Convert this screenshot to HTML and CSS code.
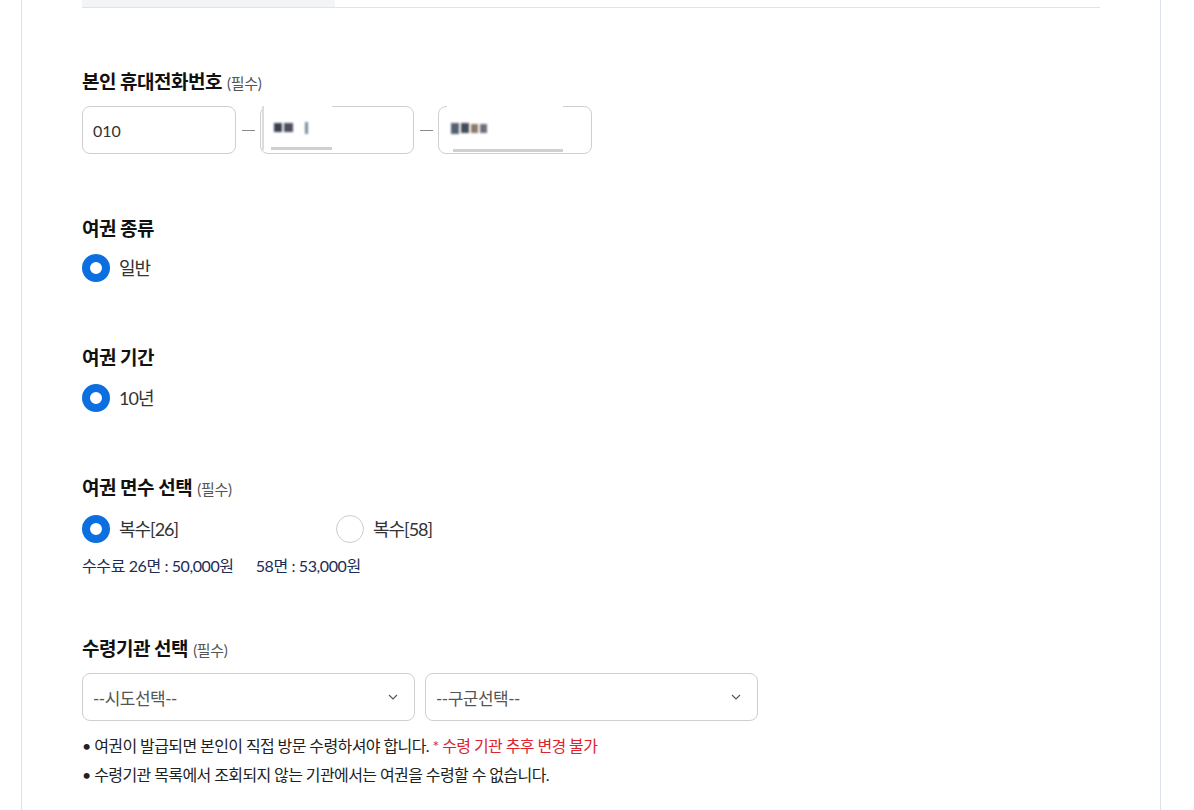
FILE: index.html
```html
<!DOCTYPE html>
<html lang="ko">
<head>
<meta charset="utf-8">
<link rel="stylesheet" href="styles.css">
</head>
<body>
<div class="card">
  <div class="tabs"><div class="tab-active"></div></div>

  <section class="field s1">
    <h3 class="label">본인 휴대전화번호 <span class="req">(필수)</span></h3>
    <div class="phone">
      <div class="inp">010</div>
      <span class="dash"></span>
      <div class="inp masked m2">
        <div class="mask">
          <i class="px p1"></i><i class="px p2"></i><i class="px p3"></i>
        </div>
      </div>
      <span class="dash"></span>
      <div class="inp masked m3">
        <div class="mask">
          <i class="px q1"></i><i class="px q2"></i><i class="px q3"></i><i class="px q4"></i>
        </div>
      </div>
    </div>
  </section>

  <section class="field s2">
    <h3 class="label">여권 종류</h3>
    <div class="radios r2">
      <label class="radio"><span class="dot on"></span><span class="rtext">일반</span></label>
    </div>
  </section>

  <section class="field s3">
    <h3 class="label">여권 기간</h3>
    <div class="radios">
      <label class="radio"><span class="dot on"></span><span class="rtext">10년</span></label>
    </div>
  </section>

  <section class="field s4">
    <h3 class="label">여권 면수 선택 <span class="req">(필수)</span></h3>
    <div class="radios r4">
      <label class="radio w254"><span class="dot on"></span><span class="rtext">복수[26]</span></label>
      <label class="radio"><span class="dot"></span><span class="rtext">복수[58]</span></label>
    </div>
    <p class="fee"><span>수수료 26면 : 50,000원</span><span>58면 : 53,000원</span></p>
  </section>

  <section class="field s5">
    <h3 class="label">수령기관 선택 <span class="req">(필수)</span></h3>
    <div class="selects">
      <div class="sel"><span>--시도선택--</span>
        <svg width="10" height="6" viewBox="0 0 10 6"><path d="M1 1l4 4 4-4" fill="none" stroke="#555" stroke-width="1.1"/></svg>
      </div>
      <div class="sel"><span>--구군선택--</span>
        <svg width="10" height="6" viewBox="0 0 10 6"><path d="M1 1l4 4 4-4" fill="none" stroke="#555" stroke-width="1.1"/></svg>
      </div>
    </div>
    <ul class="notes">
      <li>여권이 발급되면 본인이 직접 방문 수령하셔야 합니다. <em>* 수령 기관 추후 변경 불가</em></li>
      <li>수령기관 목록에서 조회되지 않는 기관에서는 여권을 수령할 수 없습니다.</li>
    </ul>
  </section>
</div>
</body>
</html>
```

FILE: styles.css
```css
* { box-sizing: border-box; }
html, body { margin: 0; padding: 0; background: #fff; }
body {
  font-family: Lato, "Noto Sans CJK KR", sans-serif;
  color: #222;
  height: 810px;
  overflow: hidden;
}
.card {
  margin-left: 21px;
  width: 1140px;
  min-height: 810px;
  border-left: 1px solid #dbe2ea;
  border-right: 1px solid #dbe2ea;
  padding: 0 60px 0 60px;
}
.tabs {
  height: 8px;
  border-bottom: 1px solid #e3e3e3;
  display: flex;
}
.tab-active {
  width: 253px;
  background: #f3f4f6;
}
.field.s1 { margin-top: 61px; }
.field.s2 { margin-top: 62px; }
.field.s3 { margin-top: 63px; }
.field.s4 { margin-top: 63px; }
.field.s5 { margin-top: 60px; }
.label {
  margin: 0 0 11px 0;
  height: 26px;
  font-size: 19px;
  line-height: 26px;
  font-weight: 700;
  color: #111;
  letter-spacing: -0.5px;
  white-space: nowrap;
}
.req {
  font-size: 15px;
  line-height: 1;
  font-weight: 400;
  color: #555;
  letter-spacing: -0.3px;
  margin-left: 1px;
}
.phone {
  display: flex;
  align-items: center;
}
.inp {
  position: relative;
  width: 154px;
  height: 48px;
  border: 1px solid #cfcfcf;
  border-radius: 8px;
  padding: 0 10px;
  display: flex;
  align-items: center;
  font-size: 16px;
  color: #333;
}
.dash {
  width: 13px;
  height: 1px;
  background: #8a8a8a;
  margin: 0 5px 0 6px;
}
.mask {
  position: absolute;
  top: -1px;
  background: #fff;
}
.m2 .mask { left: 1px; width: 70px; height: 44px; border-left: 2px solid #dcdcdc; }
.m2 .mask::after {
  content: ""; position: absolute; left: 7px; right: 0; bottom: 0; height: 3px; background: #cfcfcf;
}
.m3 .mask { left: 8px; width: 116px; height: 47px; }
.m3 .mask::after {
  content: ""; position: absolute; left: 6px; right: 0; bottom: 1px; height: 3px; background: #cfcfcf;
}
.px { position: absolute; display: block; filter: blur(0.8px); }
.p1 { left: 10px; top: 17px; width: 8px; height: 9px; background: #3a3f52; }
.p2 { left: 20px; top: 17px; width: 9px; height: 9px; background: #4a4f5f; }
.p3 { left: 41px; top: 16px; width: 3px; height: 12px; background: #7d8a99; }
.q1 { left: 4px; top: 17px; width: 8px; height: 11px; background: #56606e; }
.q2 { left: 14px; top: 17px; width: 8px; height: 10px; background: #444a58; }
.q3 { left: 24px; top: 18px; width: 7px; height: 9px; background: #8b7a68; }
.q4 { left: 33px; top: 18px; width: 7px; height: 9px; background: #6a6f7a; }

.radios { display: flex; align-items: center; margin-top: 13px; }
.radios.r2 { margin-top: 12px; }
.radios.r4 { margin-top: 14px; }
.radio { display: flex; align-items: center; }
.radio.w254 { width: 254px; }
.dot {
  width: 28px;
  height: 28px;
  border-radius: 50%;
  border: 1px solid #cccccc;
  background: #fff;
}
.dot.on { border: 8px solid #0c6fe0; }
.rtext {
  margin-left: 9px;
  font-size: 18px;
  color: #333;
  letter-spacing: -1px;
  line-height: 28px;
}
.fee {
  margin: 13px 0 0 0;
  font-size: 16px;
  line-height: 20px;
  color: #1c2d55;
  letter-spacing: -0.4px;
  display: flex;
  gap: 22px;
}
.selects { display: flex; gap: 10px; }
.sel {
  width: 333px;
  height: 48px;
  border: 1px solid #cfcfcf;
  border-radius: 8px;
  padding: 0 16px 0 10px;
  display: flex;
  align-items: center;
  justify-content: space-between;
  font-size: 17px;
  color: #555;
  letter-spacing: -0.5px;
}
.notes {
  list-style: none;
  margin: 15px 0 0 0;
  padding: 0;
  font-size: 16px;
  line-height: 20px;
  color: #222;
  letter-spacing: -0.6px;
}
.notes li { margin-bottom: 9px; }
.notes li::before { content: "• "; }
.notes em { font-style: normal; color: #e0222e; }
```
